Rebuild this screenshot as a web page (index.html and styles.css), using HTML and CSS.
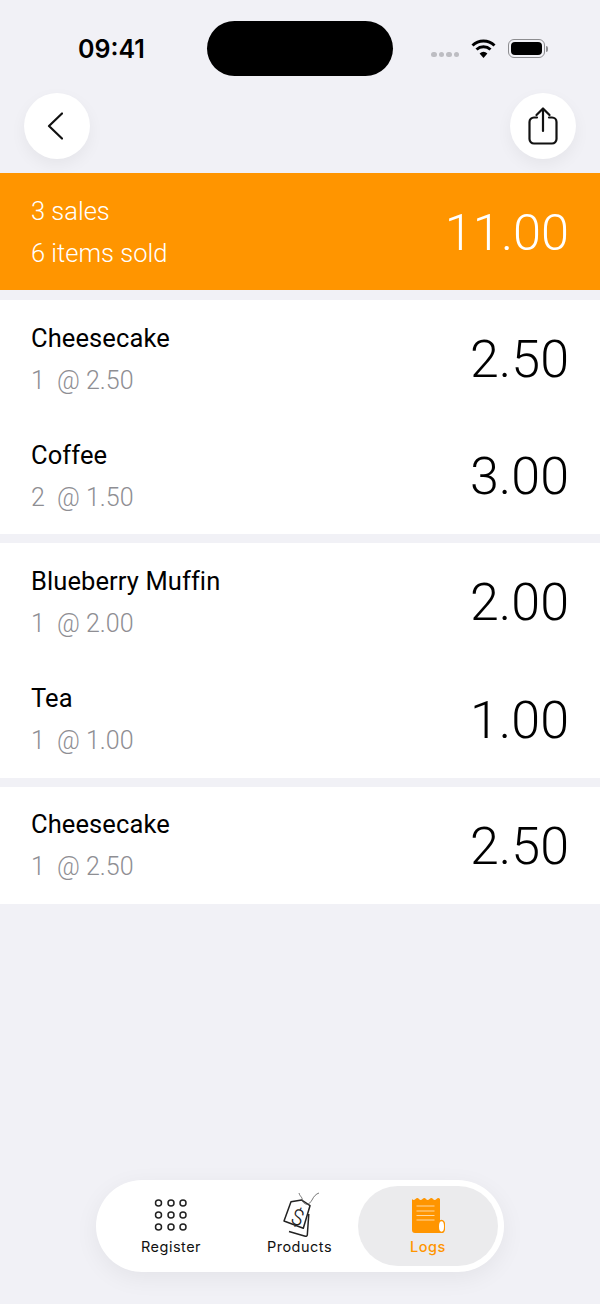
FILE: index.html
```html
<!DOCTYPE html>
<html lang="en">

<head>
    <meta charset="UTF-8">
    <meta name="viewport" content="width=device-width, initial-scale=1.0">
    <title>Logs</title>
    <link rel="stylesheet" href="styles.css">
</head>

<body>
    <div class="statusbar">
        <div class="time">09:41</div>
        <div class="island"></div>
        <div class="statusicons">
            <div class="dots"><i></i><i></i><i></i><i></i></div>
            <svg class="wifi" width="25" height="19" viewBox="0 0 25 19">
                <path d="M1.5 6.5a16 16 0 0 1 22 0M5.5 10.5a10.5 10.5 0 0 1 14 0" fill="none" stroke="#000" stroke-width="3" />
                <path d="M12.5 19 8.6 14.4a6 6 0 0 1 7.8 0z" fill="#000" />
            </svg>
            <div class="battery"><div class="batteryfill"></div></div>
            <div class="batterynib"></div>
        </div>
    </div>

    <div class="nav">
        <button class="circlebtn">
            <svg class="backicon" width="16" height="28" viewBox="0 0 16 28">
                <path d="M15 1.5 2 14l13 12.5" fill="none" stroke="#111" stroke-width="2.2" stroke-linecap="round" stroke-linejoin="round" />
            </svg>
        </button>
        <button class="circlebtn">
            <svg width="30" height="38" viewBox="0 0 30 38">
                <path d="M9 10.500H6A4.500 4.500 0 0 0 1.500 15V32A4.500 4.500 0 0 0 6 36.500h18a4.500 4.500 0 0 0 4.500-4.500V15A4.500 4.500 0 0 0 24 10.500h-3" fill="none" stroke="#111" stroke-width="2.200" stroke-linecap="round" />
                <path d="M15 24V2M8.500 8 15 1.500 21.500 8" fill="none" stroke="#111" stroke-width="2.200" stroke-linecap="round" stroke-linejoin="round" />
            </svg>
        </button>
    </div>

    <div class="row summary">
        <div>
            <p class="rowtext">3 sales</p>
            <p class="rowtext">6 items sold</p>
        </div>
        <div class="amount">11.00</div>
    </div>

    <section class="sale">
        <div class="row">
            <div>
                <p class="name">Cheesecake</p>
                <p class="qty">1 &nbsp;@ 2.50</p>
            </div>
            <div class="amount">2.50</div>
        </div>
        <div class="row">
            <div>
                <p class="name">Coffee</p>
                <p class="qty">2 &nbsp;@ 1.50</p>
            </div>
            <div class="amount">3.00</div>
        </div>
    </section>

    <section class="sale">
        <div class="row">
            <div>
                <p class="name">Blueberry Muffin</p>
                <p class="qty">1 &nbsp;@ 2.00</p>
            </div>
            <div class="amount">2.00</div>
        </div>
        <div class="row">
            <div>
                <p class="name">Tea</p>
                <p class="qty">1 &nbsp;@ 1.00</p>
            </div>
            <div class="amount">1.00</div>
        </div>
    </section>

    <section class="sale">
        <div class="row">
            <div>
                <p class="name">Cheesecake</p>
                <p class="qty">1 &nbsp;@ 2.50</p>
            </div>
            <div class="amount">2.50</div>
        </div>
    </section>

    <div class="tabbar">
        <div class="tab">
            <div class="tabicon">
                <svg width="34" height="34" viewBox="0 0 34 34" fill="none" stroke="#222" stroke-width="1.500">
                    <circle cx="4.500" cy="5" r="3" />
                    <circle cx="17" cy="5" r="3" />
                    <circle cx="29" cy="5" r="3" />
                    <circle cx="4.500" cy="17" r="3" />
                    <circle cx="17" cy="17" r="3" />
                    <circle cx="29" cy="17" r="3" />
                    <circle cx="4.500" cy="29" r="3" />
                    <circle cx="17" cy="29" r="3" />
                    <circle cx="29" cy="29" r="3" />
                </svg>
            </div>
            <div class="tablabel">Register</div>
        </div>
        <div class="tab">
            <div class="tabicon">
                <svg width="40" height="46" viewBox="-2 0 40 46">
                    <path d="M26.800 22 25.300 43a1.500 1.500 0 0 1-2 1.200L7 39.500" fill="none" stroke="#222" stroke-width="1.500" stroke-linejoin="round" />
                    <path d="M9 9.700 19.700 8 28 13.700 21.300 36.300 2 29z" fill="#fff" stroke="#222" stroke-width="1.500" stroke-linejoin="round" />
                    <path d="M17 1c1 4 4 4 3 8M20 9c4 5 7 4 10-1 2-4 4-6 7-7" fill="none" stroke="#555" stroke-width="0.800" />
                    <text class="tagdollar" x="15.500" y="33" transform="rotate(18 15.500 25.700)">$</text>
                </svg>
            </div>
            <div class="tablabel">Products</div>
        </div>
        <div class="tab active">
            <div class="tabicon">
                <svg width="34" height="36" viewBox="-1 0 34 36">
                    <path d="M0 2q1.600 2 3.500 0t3.500 0 3.500 0 3.500 0 3.500 0 3.500 0 3.500 0 3.500 0V24h2v12H3a3 3 0 0 1-3-3z" fill="#ff9500" />
                    <path d="M4.500 9h18M4.500 14h18M4.500 18.500h18M4.500 23h18" stroke="#ffd9a3" stroke-width="1" />
                    <ellipse cx="29.500" cy="29.500" rx="3.300" ry="6" fill="#fff" stroke="#ff9500" stroke-width="1.600" />
                </svg>
            </div>
            <div class="tablabel">Logs</div>
        </div>
    </div>
</body>

</html>
```
FILE: styles.css
```css
* {
    margin: 0;
    padding: 0;
    box-sizing: border-box;
}

body {
    display: flex;
    flex-direction: column;
    min-height: 1304px;
    background: #f1f1f6;
    font-family: "Liberation Sans", Arial, sans-serif;
    color: #000;
}

.statusbar {
    display: flex;
    align-items: center;
    padding-top: 21px;
}

.time {
    width: 207px;
    padding-left: 78px;
    font-family: Inter, sans-serif;
    font-size: 25px;
    font-weight: 600;
}

.island {
    width: 186px;
    height: 55px;
    border-radius: 28px;
    background: #000;
}

.statusicons {
    display: flex;
    align-items: center;
    width: 207px;
    padding-left: 38px;
}

.dots {
    display: flex;
    gap: 2px;
    margin-top: 12px;
    margin-right: 12px;
}

.dots i {
    width: 5.500px;
    height: 5.500px;
    border-radius: 50%;
    background: #bdbdc2;
}

.wifi {
    margin-right: 12px;
}

.battery {
    width: 37px;
    height: 19px;
    padding: 2px;
    border: 1.500px solid #8d8d90;
    border-radius: 6px;
}

.batteryfill {
    height: 100%;
    border-radius: 4px;
    background: #000;
}

.batterynib {
    width: 2px;
    height: 6px;
    margin-left: 1px;
    border-radius: 0 2px 2px 0;
    background: #8d8d90;
}

.nav {
    display: flex;
    justify-content: space-between;
    padding: 0 24px;
    margin-top: 17px;
    margin-bottom: 14px;
}

.circlebtn {
    display: flex;
    justify-content: center;
    align-items: center;
    width: 66px;
    height: 66px;
    border: none;
    border-radius: 50%;
    background: #fff;
    box-shadow: 0 6px 16px rgba(0, 0, 0, 0.05);
}

.backicon {
    margin-right: 5px;
}

.row {
    display: flex;
    justify-content: space-between;
    align-items: center;
    height: 117.200px;
    padding: 0 31px;
}

.summary {
    margin-bottom: 9.800px;
    background: #ff9500;
    color: #fff;
}

.summary .amount {
    font-size: 50.500px;
}

.rowtext,
.name,
.qty {
    font-size: 25px;
    line-height: 42px;
}

.name {
    padding-top: 1px;
    font-family: Roboto, sans-serif;
    font-size: 25.500px;
    letter-spacing: 0.1px;
}

.rowtext,
.qty {
    font-family: Roboto, sans-serif;
    font-weight: 300;
}

.rowtext {
    font-size: 25.500px;
}

.qty {
    padding-top: 1px;
    color: #8e8e93;
}

.amount {
    padding-top: 2px;
    font-family: Roboto, sans-serif;
    font-size: 52px;
    font-weight: 300;
}

.sale {
    margin-bottom: 9px;
    background: #fff;
}

.tabbar {
    display: grid;
    grid-template-columns: 140px 117px 140px;
    width: 408px;
    height: 92px;
    margin: auto auto 32px;
    padding: 6px 6px 6px 5px;
    border-radius: 46px;
    background: #fff;
    box-shadow: 0 6px 24px rgba(0, 0, 0, 0.06);
}

.tab {
    display: flex;
    flex-direction: column;
    align-items: center;
    padding-top: 6px;
    border-radius: 40px;
}

.tabicon {
    display: flex;
    justify-content: center;
    align-items: center;
    height: 46px;
}

.tablabel {
    font-family: Inter, sans-serif;
    font-size: 14.500px;
    font-weight: 400;
    line-height: 18px;
    letter-spacing: 0.5px;
    color: #111;
}

.active {
    background: #ebebed;
}

.active .tablabel {
    color: #ff9500;
    font-weight: 500;
}

.tagdollar {
    font-family: Roboto, sans-serif;
    font-size: 22px;
    font-weight: 300;
    text-anchor: middle;
    fill: #222;
}
```
